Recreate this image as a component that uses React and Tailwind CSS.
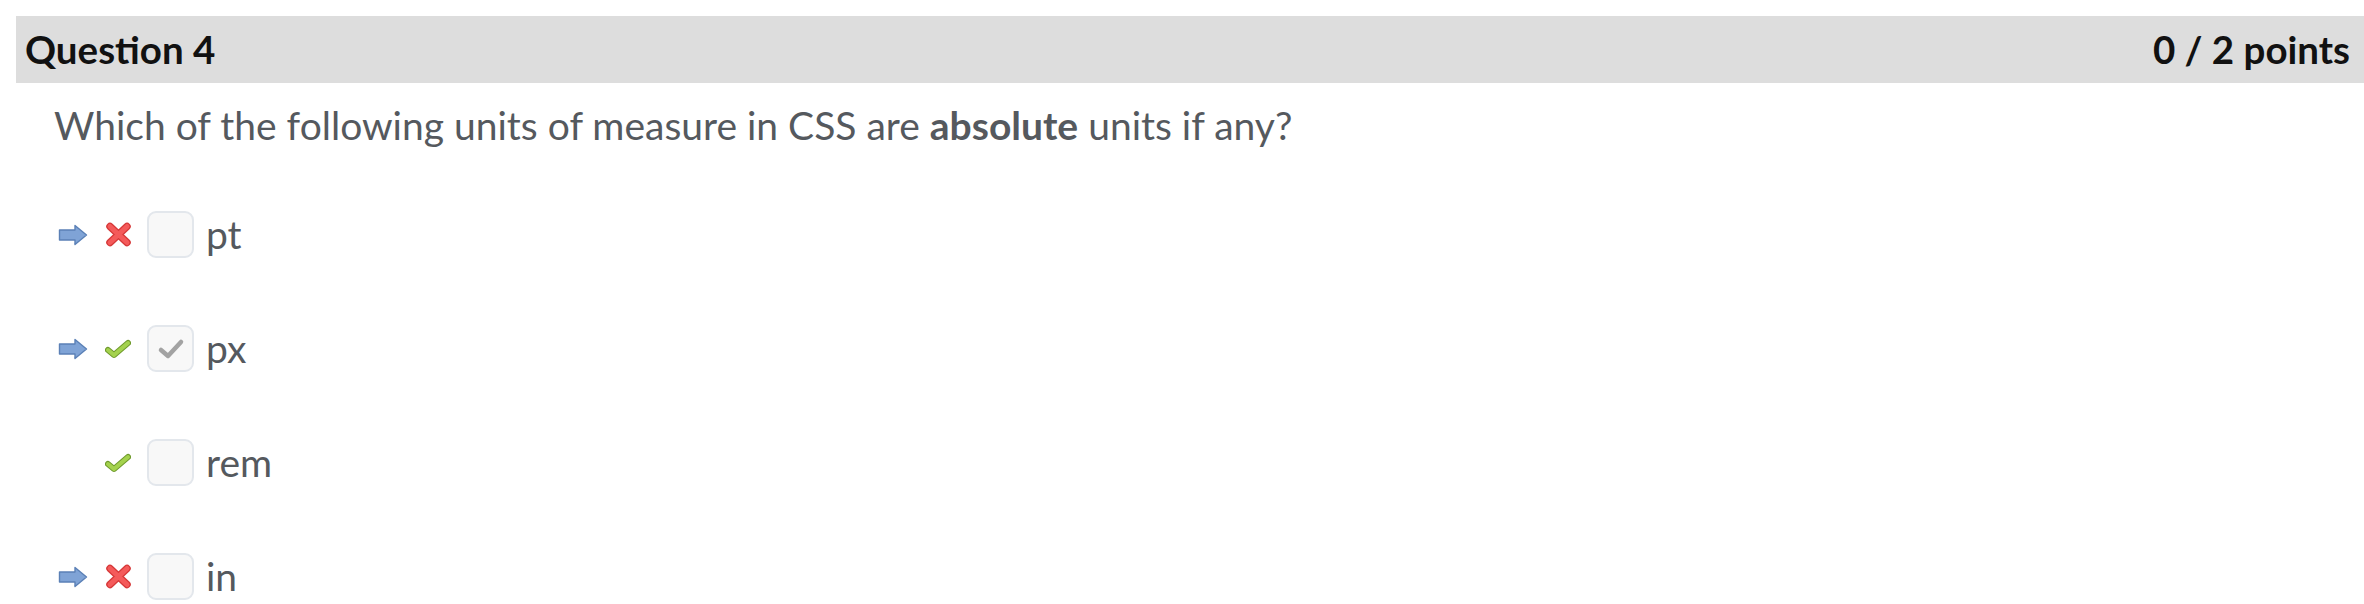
import React from 'react';

const ArrowIcon = () => (
  <svg width="30" height="22" viewBox="0 0 30 22">
    <path
      d="M1.5 6 H17 V1.5 L28.5 11 L17 20.5 V16 H1.5 Z"
      fill="#7fa3d6"
      stroke="#5b80b6"
      strokeWidth="1.4"
      strokeLinejoin="round"
    />
  </svg>
);

const CrossIcon = () => (
  <svg width="27" height="25" viewBox="0 0 27 25">
    <path
      d="M5 4.5 L22 20.5 M22 4.5 L5 20.5"
      stroke="#d63838"
      strokeWidth="7.5"
      strokeLinecap="round"
    />
    <path
      d="M5 4.5 L22 20.5 M22 4.5 L5 20.5"
      stroke="#f45a5a"
      strokeWidth="5"
      strokeLinecap="round"
    />
  </svg>
);

const CheckIcon = () => (
  <svg width="26" height="20" viewBox="0 0 26 20">
    <path
      d="M3 11 L9 16 L23 4"
      fill="none"
      stroke="#6f9a2c"
      strokeWidth="6"
      strokeLinecap="round"
      strokeLinejoin="round"
    />
    <path
      d="M3 11 L9 16 L23 4"
      fill="none"
      stroke="#a4d24e"
      strokeWidth="4"
      strokeLinecap="round"
      strokeLinejoin="round"
    />
  </svg>
);

const answers = [
  { label: 'pt', selected: true, mark: 'wrong', checked: false },
  { label: 'px', selected: true, mark: 'right', checked: true },
  { label: 'rem', selected: false, mark: 'right', checked: false },
  { label: 'in', selected: true, mark: 'wrong', checked: false },
];

function AnswerRow({ answer }) {
  return (
    <div className="flex items-center h-[47px]">
      <div className="w-[47px] flex items-center">
        {answer.selected && <ArrowIcon />}
      </div>
      <div className="w-[42px] flex items-center">
        {answer.mark === 'wrong' ? <CrossIcon /> : <CheckIcon />}
      </div>
      <div className="w-[47px] h-[47px] shrink-0 rounded-[9px] border-2 border-[#e3e7ec] bg-[#f8f8f8] flex items-center justify-center">
        {answer.checked && (
          <svg width="28" height="22" viewBox="0 0 28 22">
            <path
              d="M4 12 L11 18 L24 4"
              fill="none"
              stroke="#a3a3a3"
              strokeWidth="4.5"
              strokeLinecap="round"
              strokeLinejoin="round"
            />
          </svg>
        )}
      </div>
      <span className="ml-[12px] text-[39px] leading-[47px] text-[#55595e]">{answer.label}</span>
    </div>
  );
}

export default function App() {
  return (
    <div className="bg-white w-[2364px] h-[604px] overflow-hidden pt-[16px] pl-[16px] font-['Lato',sans-serif]">
      {/* Header */}
      <div className="bg-[#dddddd] h-[67px] flex items-center justify-between pl-[9px] pr-[14px]">
        <h2 className="text-[38.5px] font-bold text-[#111111]">Question 4</h2>
        <span className="text-[38.5px] font-bold text-[#111111]">0 / 2 points</span>
      </div>

      {/* Question */}
      <div className="pl-[38px] pt-[18px]">
        <p className="text-[39px] text-[#55595e] leading-[48px]">
          Which of the following units of measure in CSS are <strong className="font-bold">absolute</strong> units if any?
        </p>
      </div>

      {/* Answers */}
      <div className="pl-[42px] pt-[62px] flex flex-col gap-[67px]">
        {answers.map((a) => (
          <AnswerRow key={a.label} answer={a} />
        ))}
      </div>
    </div>
  );
}
